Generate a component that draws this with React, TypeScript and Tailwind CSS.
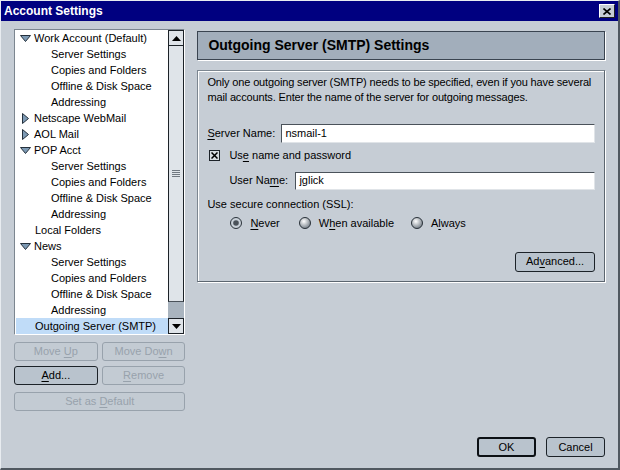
import React from 'react';

const font = { fontFamily: '"Liberation Sans", Arial, sans-serif' };

function Mn({ text, u }: { text: string; u: number }) {
  return (
    <span className="whitespace-pre">
      {text.slice(0, u)}
      <span className="underline underline-offset-2">{text[u]}</span>
      {text.slice(u + 1)}
    </span>
  );
}

function Tri({ open }: { open: boolean }) {
  return open ? (
    <svg width="11" height="7" viewBox="0 0 11 7" className="mr-[3px]">
      <path d="M0.5 0.5 H10.5 L5.5 6.5 Z" fill="#7d9ab4" stroke="#24303c" strokeWidth="1" />
    </svg>
  ) : (
    <svg width="7" height="11" viewBox="0 0 7 11" className="ml-[2px] mr-[5px]">
      <path d="M0.5 0.5 V10.5 L6.5 5.5 Z" fill="#7d9ab4" stroke="#24303c" strokeWidth="1" />
    </svg>
  );
}

type Item = { label: string; level: 0 | 1 | 2; open?: boolean; sel?: boolean };

const items: Item[] = [
  { label: 'Work Account (Default)', level: 0, open: true },
  { label: 'Server Settings', level: 2 },
  { label: 'Copies and Folders', level: 2 },
  { label: 'Offline & Disk Space', level: 2 },
  { label: 'Addressing', level: 2 },
  { label: 'Netscape WebMail', level: 0, open: false },
  { label: 'AOL Mail', level: 0, open: false },
  { label: 'POP Acct', level: 0, open: true },
  { label: 'Server Settings', level: 2 },
  { label: 'Copies and Folders', level: 2 },
  { label: 'Offline & Disk Space', level: 2 },
  { label: 'Addressing', level: 2 },
  { label: 'Local Folders', level: 1 },
  { label: 'News', level: 0, open: true },
  { label: 'Server Settings', level: 2 },
  { label: 'Copies and Folders', level: 2 },
  { label: 'Offline & Disk Space', level: 2 },
  { label: 'Addressing', level: 2 },
  { label: 'Outgoing Server (SMTP)', level: 1, sel: true },
];

function Btn({
  children,
  disabled,
  strong,
  className = '',
}: {
  children: React.ReactNode;
  disabled?: boolean;
  strong?: boolean;
  className?: string;
}) {
  return (
    <div
      className={
        'h-[19px] flex items-center justify-center rounded-[3px] text-[11px] ' +
        (disabled
          ? 'border border-[#98a2ac] text-[#98a2ac] bg-[#c3cbd3] '
          : strong
          ? 'border-2 border-[#0c1014] text-black bg-[#b9c3cd] '
          : 'border border-[#1c2228] text-black bg-[#b9c3cd] ') +
        className
      }
    >
      <span>{children}</span>
    </div>
  );
}

function Radio({ on }: { on?: boolean }) {
  return (
    <svg width="12" height="12" viewBox="0 0 12 12">
      <defs>
        <radialGradient id="rg0" cx="0.4" cy="0.35" r="0.7">
          <stop offset="0" stopColor="#ffffff" />
          <stop offset="1" stopColor="#6e7882" />
        </radialGradient>
      </defs>
      <circle cx="6" cy="6" r="5.5" fill={on ? '#c8d0d8' : 'url(#rg0)'} stroke="#2a323a" />
      {on && <circle cx="6" cy="6" r="2.8" fill="#4a525a" />}
    </svg>
  );
}

export default function App() {
  return (
    <div
      className="w-[620px] h-[470px] flex flex-col bg-[#c6cdd5] border-l border-t border-[#e8ecf0] border-r-2 border-b-2 border-r-[#505860] border-b-[#505860] text-black"
      style={font}
    >
      {/* title bar */}
      <div className="h-[20px] bg-[#000080] flex items-center justify-between pl-[3px] pr-[3px]">
        <span className="text-white font-bold text-[12px]">Account Settings</span>
        <div className="w-[16px] h-[14px] bg-[#c6cdd5] border border-t-white border-l-white border-r-[#202020] border-b-[#202020] flex items-center justify-center">
          <svg width="8" height="7" viewBox="0 0 8 7">
            <path d="M0.5 0.5 L7.5 6.5 M7.5 0.5 L0.5 6.5" stroke="#000" strokeWidth="1.6" />
          </svg>
        </div>
      </div>

      <div className="flex-1 flex flex-col px-[13px] pt-[8px] pb-[11px]">
        <div className="flex gap-[12px]">
          {/* left column */}
          <div className="w-[172px] flex flex-col">
            <div className="h-[306px] flex bg-white border border-t-[#7c8690] border-l-[#7c8690] border-r-white border-b-white">
              <div className="flex-1 flex flex-col pl-[1px]">
                {items.map((it, i) => (
                  <div
                    key={i}
                    className={
                      'h-[16px] flex items-center text-[11px] whitespace-nowrap ' +
                      (it.sel ? 'bg-[#c0dcf8] ' : '') +
                      (it.level === 0 ? 'pl-[4px]' : it.level === 1 ? 'pl-[19px]' : 'pl-[35px]')
                    }
                  >
                    {it.level === 0 && <Tri open={!!it.open} />}
                    {it.label}
                  </div>
                ))}
              </div>
              {/* scrollbar */}
              <div className="w-[16px] flex flex-col bg-[#a9b4bf]">
                <div className="h-[16px] bg-[#dfe4e9] border border-[#1c2228] flex items-center justify-center">
                  <svg width="9" height="5" viewBox="0 0 9 5">
                    <path d="M0 5 L4.5 0 L9 5 Z" fill="#000" />
                  </svg>
                </div>
                <div className="h-[256px] bg-[#dfe4e9] border-x border-[#1c2228] border-b border-b-[#4a525a] flex items-center justify-center">
                  <div className="flex flex-col gap-[1px]">
                    <div className="w-[8px] h-[1px] bg-[#707880]" />
                    <div className="w-[8px] h-[1px] bg-[#707880]" />
                    <div className="w-[8px] h-[1px] bg-[#707880]" />
                    <div className="w-[8px] h-[1px] bg-[#707880]" />
                  </div>
                </div>
                <div className="flex-1" />
                <div className="h-[16px] bg-[#dfe4e9] border border-[#1c2228] flex items-center justify-center">
                  <svg width="9" height="5" viewBox="0 0 9 5">
                    <path d="M0 0 L4.5 5 L9 0 Z" fill="#000" />
                  </svg>
                </div>
              </div>
            </div>

            <div className="grid grid-cols-2 gap-x-[4px] gap-y-[5px] mt-[7px]">
              <Btn disabled>
                <Mn text="Move Up" u={5} />
              </Btn>
              <Btn disabled>
                <Mn text="Move Down" u={7} />
              </Btn>
              <Btn>
                <Mn text="Add..." u={0} />
              </Btn>
              <Btn disabled>
                <Mn text="Remove" u={0} />
              </Btn>
              <Btn disabled className="col-span-2 mt-[2px]">
                <Mn text="Set as Default" u={7} />
              </Btn>
            </div>
          </div>

          {/* right column */}
          <div className="w-[409px] flex flex-col pt-[2px]">
            <div className="h-[29px] bg-[#a2aebb] border border-[#3a4450] shadow-[1px_1px_0_#ffffff] flex items-center pl-[10px]">
              <span className="font-bold text-[14px]">Outgoing Server (SMTP) Settings</span>
            </div>

            <div className="mt-[10px] h-[212px] border border-t-[#7c8690] border-l-[#7c8690] border-r-[#5c6670] border-b-[#5c6670] shadow-[inset_1px_1px_0_#ffffff,1px_1px_0_#ffffff] px-[9px] pt-[4px] text-[11px]">
              <p className="leading-[15px] whitespace-nowrap tracking-[-0.15px]">
                Only one outgoing server (SMTP) needs to be specified, even if you have several
                <br />
                mail accounts. Enter the name of the server for outgoing messages.
              </p>

              <div className="flex items-center mt-[19px]">
                <span className="w-[74px]">
                  <Mn text="Server Name:" u={0} />
                </span>
                <div className="flex-1 h-[19px] bg-white border border-t-[#4a525a] border-l-[#4a525a] border-r-[#e0e4e8] border-b-[#e0e4e8] flex items-center pl-[3px]">
                  nsmail-1
                </div>
              </div>

              <div className="flex items-center mt-[4px] pl-[2px]">
                <div className="w-[11px] h-[11px] bg-[#d8dde2] border border-[#1c2228] flex items-center justify-center">
                  <svg width="7" height="7" viewBox="0 0 7 7">
                    <path d="M0.5 0.5 L6.5 6.5 M6.5 0.5 L0.5 6.5" stroke="#000" strokeWidth="1.5" />
                  </svg>
                </div>
                <span className="ml-[9px]">
                  <Mn text="Use name and password" u={2} />
                </span>
              </div>

              <div className="flex items-center mt-[8px] pl-[22px]">
                <span className="w-[66px]">
                  <Mn text="User Name:" u={7} />
                </span>
                <div className="flex-1 h-[18px] bg-white border border-t-[#4a525a] border-l-[#4a525a] border-r-[#e0e4e8] border-b-[#e0e4e8] flex items-center pl-[3px]">
                  jglick
                </div>
              </div>

              <div className="mt-[6px]">Use secure connection (SSL):</div>

              <div className="flex items-center mt-[3px] pl-[23px]">
                <Radio on />
                <span className="ml-[8px]">
                  <Mn text="Never" u={0} />
                </span>
                <span className="ml-[19px] flex">
                  <Radio />
                </span>
                <span className="ml-[8px]">
                  <Mn text="When available" u={1} />
                </span>
                <span className="ml-[17px] flex">
                  <Radio />
                </span>
                <span className="ml-[8px]">
                  <Mn text="Always" u={1} />
                </span>
              </div>

              <div className="flex justify-end mt-[20px]">
                <Btn className="w-[80px] h-[20px]">
                  <Mn text="Advanced..." u={2} />
                </Btn>
              </div>
            </div>
          </div>
        </div>

        <div className="flex-1" />
        <div className="flex justify-end gap-[10px]">
          <Btn strong className="w-[59px] h-[20px]">
            OK
          </Btn>
          <Btn className="w-[59px] h-[20px]">Cancel</Btn>
        </div>
      </div>
    </div>
  );
}
